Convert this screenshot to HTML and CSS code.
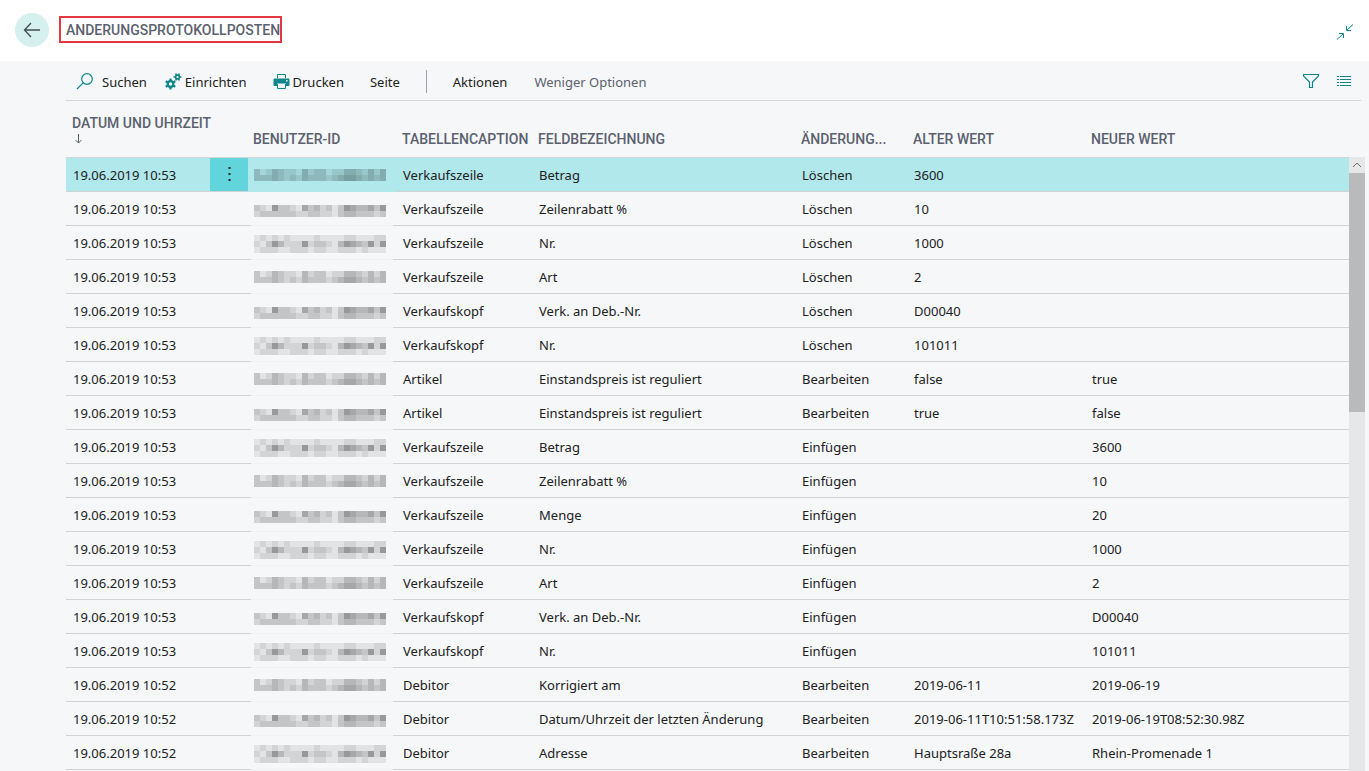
FILE: index.html
```
<!DOCTYPE html>
<html lang="de">
<head>
<meta charset="utf-8">
<title>Änderungsprotokollposten</title>
<link rel="stylesheet" href="styles.css">
<script src="rows.js" defer></script>
</head>
<body>
<header class="topbar">
  <button class="back" aria-label="Zurück"><svg width="18" height="16" viewBox="0 0 18 16"><path d="M17 8H1.500M8 1L1.500 8L8 15"/></svg></button>
  <h1 class="title">ANDERUNGSPROTOKOLLPOSTEN</h1>
  <button class="collapse" aria-label="Verkleinern"><svg width="16" height="16" viewBox="0 0 16 16"><path d="M16 .5L10 6M9.500 2V6.500H14M0 15.500L6 10M2 9.500H6.500V14"/></svg></button>
</header>
<main class="page">
  <nav class="toolbar">
    <button class="tool search"><svg width="18" height="17" viewBox="0 0 18 17"><circle cx="11" cy="6" r="5.300"/><path d="M7.200 9.800L1 16"/></svg>Suchen</button>
    <button class="tool setup"><svg width="17" height="17" viewBox="0 0 17 17"><g class="gear"><circle cx="5.500" cy="11" r="2.800"/><path d="M5.500 8V5.500M5.500 14v2.500M8.100 9.500l2.200-1.200M2.900 12.500L.7 13.700M2.900 9.500L.7 8.300M8.100 12.500l2.200 1.200"/></g><g class="gear small"><circle cx="12.500" cy="4" r="1.900"/><path d="M11.500 2.200l-.8-1.700M13.500 2.200l.8-1.700M10.700 4H8.500M14.300 4h2.200M11.500 5.800l-.8 1.700M13.500 5.800l.8 1.700"/></g></svg>Einrichten</button>
    <button class="tool print"><svg width="17" height="16" viewBox="0 0 17 16"><path class="solid" d="M1.500 4.500H15.500Q16.500 4.500 16.500 5.500V11Q16.500 12 15.500 12H13V9.500H4V12H1.500Q.5 12 .5 11V5.500Q.5 4.500 1.500 4.500Z"/><path d="M4.500 4V.5H12.500V4M4.500 10V14.500H12.500V10"/><path class="dot" d="M13 6h1.500v1.500H13z"/></svg>Drucken</button>
    <button class="tool side">Seite</button>
    <span class="divider"></span>
    <button class="tool actions">Aktionen</button>
    <button class="tool less">Weniger Optionen</button>
    <button class="tool filter" aria-label="Filter"><svg width="16" height="15" viewBox="0 0 16 15"><path d="M.5 .5H15.500V2L9.500 8V13.500H6.500V8L.5 2Z"/></svg></button>
    <button class="tool list" aria-label="Liste"><svg width="14" height="11" viewBox="0 0 14 11"><path d="M0 .5H2M3 .5H14M0 3.500H2M3 3.500H14M0 6.500H2M3 6.500H14M0 9.500H2M3 9.500H14"/></svg></button>
  </nav>
  <div class="list-area">
    <table class="entries">
      <colgroup><col class="c-date"><col class="c-menu"><col class="c-user"><col class="c-caption"><col class="c-field"><col class="c-change"><col class="c-old"><col></colgroup>
      <thead>
        <tr><th colspan="2">DATUM UND UHRZEIT<svg class="sort" width="9" height="16" viewBox="0 0 9 16"><path d="M4.500 3V12M1.500 9L4.500 12L7.500 9"/></svg></th><th>BENUTZER-ID</th><th>TABELLENCAPTION</th><th>FELDBEZEICHNUNG</th><th>ÄNDERUNG...</th><th>ALTER WERT</th><th>NEUER WERT</th></tr>
      </thead>
      <tbody id="rows"></tbody>
    </table>
    <div class="scrollbar"><button class="scroll-up" aria-label="Nach oben"><svg width="10" height="6" viewBox="0 0 10 6"><path d="M1 5L5 1L9 5"/></svg></button><div class="thumb"></div></div>
  </div>
</main>
</body>
</html>
```
FILE: styles.css
```
* { box-sizing: border-box; }
html, body { height: 100%; }
body {
  margin: 0;
  display: flex;
  flex-direction: column;
  overflow: hidden;
  background: #f5f7f9;
  color: #212121;
  font: 13px/18px "Noto Sans", sans-serif;
}
button {
  padding: 0;
  border: 0;
  background: none;
  color: inherit;
  font: inherit;
}
svg { display: block; fill: none; stroke: #0f868c; flex: none; }

.topbar {
  flex: none;
  display: flex;
  align-items: center;
  height: 61px;
  padding: 0 16px 2px 15px;
  background: #fff;
}
.back {
  display: grid;
  place-items: center;
  width: 34px;
  height: 34px;
  border-radius: 50%;
  background: #d5f0ef;
}
.back svg { stroke: #414b54; stroke-width: 1.3; }
.title {
  margin: 0 0 0 10px;
  padding: 4px 0 2px 5px;
  border: 2px solid #e2383f;
  color: #5b616e;
  font: 500 14px/17px Roboto, sans-serif;
}
.collapse { margin: 4px 0 0 auto; }

.page {
  flex: 1;
  min-height: 0;
  display: flex;
  flex-direction: column;
  padding: 0 4px 0 66px;
}
.toolbar {
  flex: none;
  display: flex;
  align-items: center;
  height: 40px;
  margin-right: 4px;
  padding: 2px 10px 0 10px;
  border-bottom: 1px solid #d3d6d9;
}
.tool { display: flex; align-items: center; gap: 3px; white-space: nowrap; }
.search { gap: 8px; }
.search svg { stroke-width: 1.2; }
.setup { margin-left: 18px; }
.gear { stroke-width: 2.2; }
.gear.small { stroke-width: 1.6; }
.print { margin-left: 26px; }
.print .solid { fill: #0f868c; stroke: none; }
.print .dot { fill: #f5f7f9; stroke: none; }
.side { margin-left: 26px; }
.divider { width: 1px; height: 23px; margin: 0 26px; background: #9da2a8; }
.less { margin-left: 27px; color: #5b616e; }
.filter { margin-left: auto; }
.filter svg { stroke-width: 1.2; }
.list { margin-left: 18px; }

.list-area { flex: 1; min-height: 0; display: flex; }
.entries {
  flex: 1;
  width: 0;
  align-self: flex-start;
  table-layout: fixed;
  border-collapse: separate;
  border-spacing: 0;
}
.c-date { width: 144px; }
.c-menu { width: 38px; }
.c-user { width: 149px; }
.c-caption { width: 136px; }
.c-field { width: 263px; }
.c-change { width: 112px; }
.c-old { width: 178px; }
.entries th {
  height: 57px;
  padding: 0 0 10px 6px;
  border-bottom: 1px solid #d3d6d9;
  vertical-align: bottom;
  text-align: left;
  white-space: nowrap;
  color: #5b616e;
  font: 500 14px/16px Roboto, sans-serif;
}
.entries th:nth-child(n+2) { padding-left: 5px; }
.sort { margin-left: 2px; stroke: #5b616e; }
.entries td {
  height: 34px;
  padding: 0 0 0 6px;
  border-bottom: 1px solid #d0d3d6;
  white-space: nowrap;
}
.entries td:first-child { padding-left: 7px; }
.entries td.user {
  border-bottom: 0;
  background: linear-gradient(90deg, #d0d3d6 3px, #f1f2f4 3px, #f1f2f4 145px, #d0d3d6 145px) bottom / 100% 1px no-repeat;
}
.mosaic { fill: #000; stroke: none; shape-rendering: crispEdges; }
.selected td, .entries .selected td.user { background: #b1e8ec; }
.entries .selected td.menu { padding: 0; background: #62d5dc; }
.dots { display: grid; place-items: center; width: 100%; height: 33px; }
.dots svg { fill: #212121; stroke: none; }

.scrollbar { width: 16px; margin-top: 56px; background: #e6e7e8; }
.scroll-up { display: grid; place-items: center; width: 100%; height: 16px; }
.scroll-up svg { stroke: #6b6f73; }
.thumb { height: 239px; background: #b8babb; }
```
FILE: rows.js
```
// Columns: time, table caption, field, kind of change, old value, new value
const entries = [
  ["19.06.2019 10:53", "Verkaufszeile", "Betrag", "Löschen", "3600", ""],
  ["19.06.2019 10:53", "Verkaufszeile", "Zeilenrabatt %", "Löschen", "10", ""],
  ["19.06.2019 10:53", "Verkaufszeile", "Nr.", "Löschen", "1000", ""],
  ["19.06.2019 10:53", "Verkaufszeile", "Art", "Löschen", "2", ""],
  ["19.06.2019 10:53", "Verkaufskopf", "Verk. an Deb.-Nr.", "Löschen", "D00040", ""],
  ["19.06.2019 10:53", "Verkaufskopf", "Nr.", "Löschen", "101011", ""],
  ["19.06.2019 10:53", "Artikel", "Einstandspreis ist reguliert", "Bearbeiten", "false", "true"],
  ["19.06.2019 10:53", "Artikel", "Einstandspreis ist reguliert", "Bearbeiten", "true", "false"],
  ["19.06.2019 10:53", "Verkaufszeile", "Betrag", "Einfügen", "", "3600"],
  ["19.06.2019 10:53", "Verkaufszeile", "Zeilenrabatt %", "Einfügen", "", "10"],
  ["19.06.2019 10:53", "Verkaufszeile", "Menge", "Einfügen", "", "20"],
  ["19.06.2019 10:53", "Verkaufszeile", "Nr.", "Einfügen", "", "1000"],
  ["19.06.2019 10:53", "Verkaufszeile", "Art", "Einfügen", "", "2"],
  ["19.06.2019 10:53", "Verkaufskopf", "Verk. an Deb.-Nr.", "Einfügen", "", "D00040"],
  ["19.06.2019 10:53", "Verkaufskopf", "Nr.", "Einfügen", "", "101011"],
  ["19.06.2019 10:52", "Debitor", "Korrigiert am", "Bearbeiten", "2019-06-11", "2019-06-19"],
  ["19.06.2019 10:52", "Debitor", "Datum/Uhrzeit der letzten Änderung", "Bearbeiten", "2019-06-11T10:51:58.173Z", "2019-06-19T08:52:30.98Z"],
  ["19.06.2019 10:52", "Debitor", "Adresse", "Bearbeiten", "Hauptsraße 28a", "Rhein-Promenade 1"]
];

// Pixelated user names: one digit per 6px cell, higher is darker
const mosaics = [
  { top: 6, lines: ["3124322142331224432424", "3334323243332345543434"] },
  { top: 8, lines: ["3216332153423136544536", "2333333223322134433323"] },
  { top: 4, lines: ["1212121111211112211122", "2136422262332146543626", "1222112221221122212111"] }
];

function mosaic(index) {
  const { top, lines } = mosaics[index % 3];
  const cells = lines.flatMap((line, y) => [...line].map((level, x) =>
    `<rect x="${x * 6}" y="${top + y * 6}" width="6" height="6" opacity="${(level * 0.06 + 0.02).toFixed(2)}"/>`));
  return `<svg class="mosaic" width="132" height="24" viewBox="0 0 132 24">${cells.join("")}</svg>`;
}

const dots = '<button class="dots" aria-label="Weitere Optionen"><svg width="3" height="15" viewBox="0 0 3 15"><path d="M.5 0h2v2h-2zM.5 6h2v2h-2zM.5 12h2v2h-2z"/></svg></button>';

document.getElementById("rows").innerHTML = entries.map(([time, ...rest], i) =>
  `<tr class="${i ? "" : "selected"}"><td>${time}</td><td class="menu">${i ? "" : dots}</td><td class="user">${mosaic(i)}</td>${rest.map(v => `<td>${v}</td>`).join("")}</tr>`
).join("");
```
